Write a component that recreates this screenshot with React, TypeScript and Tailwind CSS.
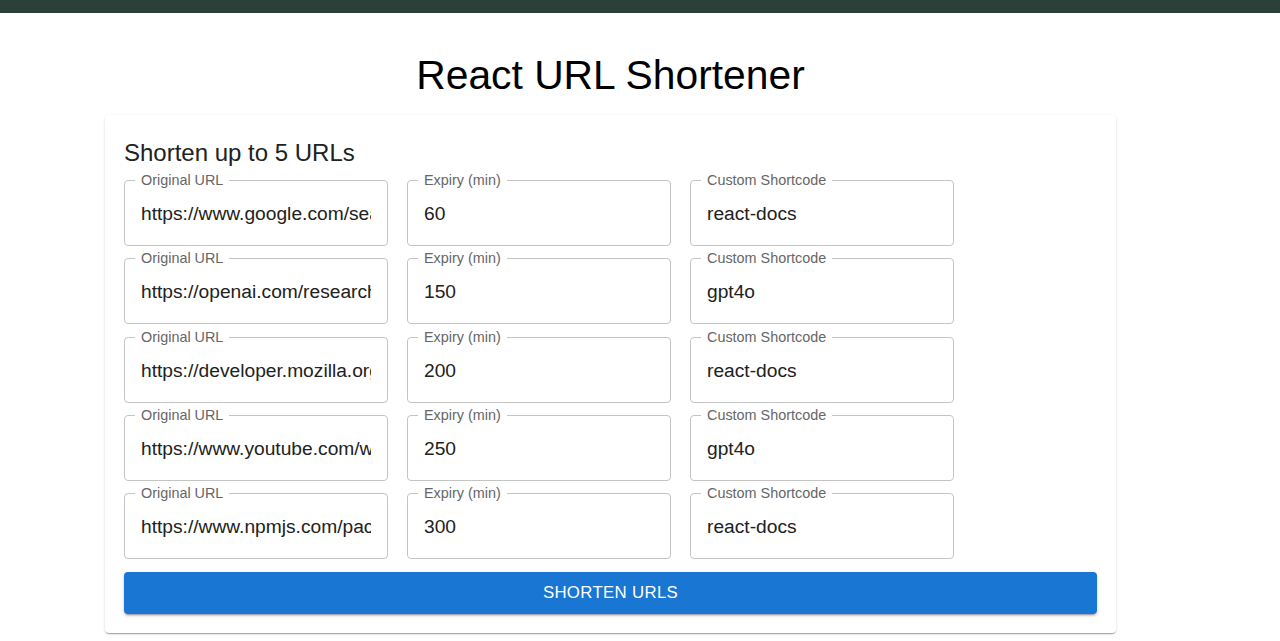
const rows = [
  { url: 'https://www.google.com/search?q=react+router', expiry: '60', code: 'react-docs' },
  { url: 'https://openai.com/research/gpt-4o', expiry: '150', code: 'gpt4o' },
  { url: 'https://developer.mozilla.org/en-US/docs/Web', expiry: '200', code: 'react-docs' },
  { url: 'https://www.youtube.com/watch?v=dQw4w9WgXcQ', expiry: '250', code: 'gpt4o' },
  { url: 'https://www.npmjs.com/package/react', expiry: '300', code: 'react-docs' },
]

function OutlinedField({ label, value }: { label: string; value: string }) {
  return (
    <div className="relative h-[66px] w-[264px] rounded-[4px] border border-[#c4c4c4]">
      {/* notched label */}
      <span className="absolute left-[10px] top-[-10px] bg-white px-[6px] text-[14.4px] leading-[18px] text-[#666]">
        {label}
      </span>
      <input
        readOnly
        value={value}
        className="h-full w-full bg-transparent px-[16px] pt-[2px] text-[19.2px] text-[#212121] outline-none"
      />
    </div>
  )
}

export default function App() {
  return (
    <div className="min-h-screen bg-white font-['Liberation_Sans',Arial,sans-serif]">
      <div className="h-[13px] bg-[#2a4039]" />

      <div className="ml-[105px] w-[1011px]">
        <h1 className="mt-[32px] text-center text-[40.8px] leading-[60px] text-black">React URL Shortener</h1>

        <div className="mt-[10px] rounded-[4px] bg-white px-[19px] pb-[19px] pt-[24px] shadow-[0_2px_1px_-1px_rgba(0,0,0,0.2),0_1px_1px_0_rgba(0,0,0,0.14),0_1px_3px_0_rgba(0,0,0,0.12)]">
          <h2 className="text-[24px] leading-[28px] text-[#212121]">Shorten up to 5 URLs</h2>

          <div className="mt-[13px] flex flex-col gap-[12.25px]">
            {rows.map((r, i) => (
              <div key={i} className="flex gap-[19px]">
                <OutlinedField label="Original URL" value={r.url} />
                <OutlinedField label="Expiry (min)" value={r.expiry} />
                <OutlinedField label="Custom Shortcode" value={r.code} />
              </div>
            ))}
          </div>

          <button className="mt-[13px] h-[42px] w-full rounded-[4px] bg-[#1976d2] text-[16.8px] uppercase tracking-[0.02em] text-white shadow-[0_3px_1px_-2px_rgba(0,0,0,0.2),0_2px_2px_0_rgba(0,0,0,0.14),0_1px_5px_0_rgba(0,0,0,0.12)]">
            Shorten URLs
          </button>
        </div>
      </div>
    </div>
  )
}
